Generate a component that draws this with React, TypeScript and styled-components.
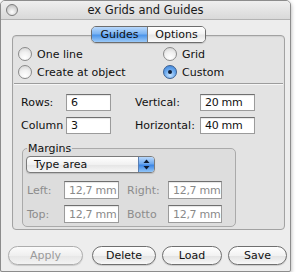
import styled, { createGlobalStyle } from "styled-components";

const GlobalStyle = createGlobalStyle`
  * { box-sizing: border-box; }
  body {
    margin: 0;
    background: #ffffff;
    font-family: 'DejaVu Sans', 'Liberation Sans', sans-serif;
    font-size: 11px;
    color: #111;
  }
`;

const Window = styled.div`
  width: 291px;
  height: 272px;
  border: 1px solid #8c8c8c;
  border-radius: 5px 5px 2px 2px;
  background: #ededed;
  box-shadow: 0 2px 4px rgba(0, 0, 0, 0.35);
  display: flex;
  flex-direction: column;
  overflow: hidden;
`;

const TitleBar = styled.div`
  height: 19px;
  display: grid;
  grid-template-columns: 24px 1fr 24px;
  align-items: center;
  background: linear-gradient(#efefef, #d9d9d9);
  border-bottom: 1px solid #b3b3b3;
`;

const CloseButton = styled.div`
  width: 12px;
  height: 12px;
  margin-left: 5px;
  border-radius: 50%;
  border: 1px solid #7d7d7d;
  background: radial-gradient(circle at 50% 70%, #ffffff, #d6d6d6 55%, #b4b4b4);
`;

const Title = styled.div`
  text-align: center;
  font-size: 11.5px;
  color: #1a1a1a;
`;

const Content = styled.div`
  padding: 6px 5px 0 11px;
  display: flex;
  flex-direction: column;
`;

const TabBar = styled.div`
  width: 273px;
  display: flex;
  justify-content: center;
  position: relative;
  z-index: 1;
  margin-bottom: -8px;
`;

const Segments = styled.div`
  display: flex;
  height: 17px;
  border: 1px solid #6d6d6d;
  border-radius: 5px;
  overflow: hidden;
  box-shadow: 0 1px 1px rgba(0, 0, 0, 0.15);
`;

const Segment = styled.div<{ $active?: boolean; $w: number }>`
  width: ${(p) => p.$w}px;
  display: flex;
  align-items: center;
  justify-content: center;
  font-size: 11px;
  color: #111;
  background: ${(p) =>
    p.$active
      ? "linear-gradient(#b9d8fb 0%, #7cb4f2 45%, #4c95ea 55%, #9ccaf8 100%)"
      : "linear-gradient(#ffffff 0%, #f4f4f4 45%, #e6e6e6 55%, #fafafa 100%)"};
  & + & {
    border-left: 1px solid #7a7a7a;
  }
`;

const TabBox = styled.div`
  width: 273px;
  border: 1px solid #a2a2a2;
  border-radius: 4px;
  background: #e3e3e3;
  padding: 9px 5px 2px 5px;
  box-shadow: inset 0 1px 1px rgba(0, 0, 0, 0.08);
`;

const RadioGrid = styled.div`
  display: grid;
  grid-template-columns: 145px 1fr;
  grid-auto-rows: 18px;
`;

const RadioItem = styled.label`
  display: flex;
  align-items: center;
  gap: 5px;
  font-size: 11px;
`;

const RadioDot = styled.span<{ $on?: boolean }>`
  width: 14px;
  height: 14px;
  border-radius: 50%;
  border: 1px solid ${(p) => (p.$on ? "#3a5f91" : "#8a8a8a")};
  background: ${(p) =>
    p.$on
      ? "radial-gradient(circle at 50% 75%, #c8e4ff, #6aa9ee 50%, #3a7fd6)"
      : "radial-gradient(circle at 50% 80%, #ffffff, #f0f0f0 50%, #cfcfcf)"};
  display: flex;
  align-items: center;
  justify-content: center;
  &::after {
    content: "";
    width: 4px;
    height: 4px;
    border-radius: 50%;
    background: #10203a;
    display: ${(p) => (p.$on ? "block" : "none")};
  }
`;

const Separator = styled.div`
  height: 2px;
  margin: 2px -4px 0 -4px;
  border-top: 1px solid #9c9c9c;
  border-bottom: 1px solid #f6f6f6;
`;

const FieldGrid = styled.div`
  display: grid;
  grid-template-columns: 45px 45px 89px 55px;
  row-gap: 6px;
  margin: 9px 0 0 3px;
  align-items: center;
`;

const FieldLabel = styled.span<{ $indent?: number; $disabled?: boolean }>`
  padding-left: ${(p) => p.$indent ?? 0}px;
  font-size: 11px;
  white-space: nowrap;
  overflow: hidden;
  color: ${(p) => (p.$disabled ? "#8c8c8c" : "#111")};
`;

const TextBox = styled.div<{ $disabled?: boolean; $h?: number }>`
  height: ${(p) => p.$h ?? 17}px;
  border: 1px solid #9b9b9b;
  border-top-color: #6f6f6f;
  background: #fff;
  padding-left: 4px;
  display: flex;
  align-items: center;
  font-size: 11px;
  letter-spacing: -0.3px;
  white-space: nowrap;
  overflow: hidden;
  color: ${(p) => (p.$disabled ? "#8a8a8a" : "#111")};
  box-shadow: inset 0 1px 1px rgba(0, 0, 0, 0.1);
`;

const Group = styled.fieldset`
  width: 214px;
  margin: 8px 0 0 4px;
  padding: 0 3px 3px 3px;
  border: 1px solid #aaaaaa;
  border-radius: 5px;
  background: rgba(0, 0, 0, 0.025);
  min-width: 0;
`;

const Legend = styled.legend`
  padding: 0 1px;
  margin-left: 1px;
  font-size: 11px;
  line-height: 13px;
  color: #111;
`;

const Select = styled.div`
  width: 129px;
  height: 17px;
  margin-top: 1px;
  border: 1px solid #7b7b7b;
  border-radius: 4px;
  display: flex;
  overflow: hidden;
  background: linear-gradient(#ffffff, #f1f1f1 50%, #e4e4e4 51%, #f7f7f7);
  box-shadow: 0 1px 1px rgba(0, 0, 0, 0.15);
`;

const SelectText = styled.div`
  flex: 1;
  padding-left: 7px;
  display: flex;
  align-items: center;
  font-size: 11px;
`;

const SelectArrows = styled.div`
  width: 16px;
  display: flex;
  align-items: center;
  justify-content: center;
  border-left: 1px solid #5a7fb3;
  background: linear-gradient(#b9d8fb 0%, #6ea9ef 45%, #3d86e4 55%, #92c6f8 100%);
`;

const MarginGrid = styled.div`
  display: grid;
  grid-template-columns: 38px 55px 49px 54px;
  row-gap: 6px;
  margin-top: 8px;
  align-items: center;
`;

const Footer = styled.div`
  display: flex;
  align-items: center;
  gap: 6px;
  padding: 16px 0 0 7px;
`;

const PushButton = styled.div<{ $w: number; $disabled?: boolean; $extra?: number }>`
  width: ${(p) => p.$w}px;
  height: 19px;
  margin-right: ${(p) => p.$extra ?? 0}px;
  border: 1px solid ${(p) => (p.$disabled ? "#adadad" : "#6f6f6f")};
  border-radius: 10px;
  display: flex;
  align-items: center;
  justify-content: center;
  font-size: 11px;
  color: ${(p) => (p.$disabled ? "#9a9a9a" : "#111")};
  background: ${(p) =>
    p.$disabled
      ? "linear-gradient(#fbfbfb, #efefef 50%, #e6e6e6 51%, #f3f3f3)"
      : "linear-gradient(#ffffff, #f2f2f2 50%, #e2e2e2 51%, #f8f8f8)"};
  box-shadow: 0 1px 1px rgba(0, 0, 0, 0.15);
`;

function Arrows() {
  return (
    <svg width="7" height="11" viewBox="0 0 7 11">
      <path d="M3.5 0.5 L6.5 4 L0.5 4 Z" fill="#0d1a2e" />
      <path d="M3.5 10.5 L6.5 7 L0.5 7 Z" fill="#0d1a2e" />
    </svg>
  );
}

export default function App() {
  return (
    <>
      <GlobalStyle />
      <Window>
        <TitleBar>
          <CloseButton />
          <Title>ex Grids and Guides</Title>
          <span />
        </TitleBar>
        <Content>
          <TabBar>
            <Segments>
              <Segment $active $w={55}>Guides</Segment>
              <Segment $w={58}>Options</Segment>
            </Segments>
          </TabBar>
          <TabBox>
            <RadioGrid>
              <RadioItem><RadioDot />One line</RadioItem>
              <RadioItem><RadioDot />Grid</RadioItem>
              <RadioItem><RadioDot />Create at object</RadioItem>
              <RadioItem><RadioDot $on />Custom</RadioItem>
            </RadioGrid>
            <Separator />
            <FieldGrid>
              <FieldLabel>Rows:</FieldLabel>
              <TextBox>6</TextBox>
              <FieldLabel $indent={24}>Vertical:</FieldLabel>
              <TextBox>20 mm</TextBox>
              <FieldLabel>Column</FieldLabel>
              <TextBox>3</TextBox>
              <FieldLabel $indent={24}>Horizontal:</FieldLabel>
              <TextBox>40 mm</TextBox>
            </FieldGrid>
            <Group>
              <Legend>Margins</Legend>
              <Select>
                <SelectText>Type area</SelectText>
                <SelectArrows><Arrows /></SelectArrows>
              </Select>
              <MarginGrid>
                <FieldLabel $indent={1} $disabled>Left:</FieldLabel>
                <TextBox $disabled $h={18}>12,7 mm</TextBox>
                <FieldLabel $indent={8} $disabled>Right:</FieldLabel>
                <TextBox $disabled $h={18}>12,7 mm</TextBox>
                <FieldLabel $indent={1} $disabled>Top:</FieldLabel>
                <TextBox $disabled $h={18}>12,7 mm</TextBox>
                <FieldLabel $indent={8} $disabled>Botto</FieldLabel>
                <TextBox $disabled $h={18}>12,7 mm</TextBox>
              </MarginGrid>
            </Group>
          </TabBox>
        </Content>
        <Footer>
          <PushButton $w={75} $disabled $extra={3}>Apply</PushButton>
          <PushButton $w={64}>Delete</PushButton>
          <PushButton $w={60}>Load</PushButton>
          <PushButton $w={59}>Save</PushButton>
        </Footer>
      </Window>
    </>
  );
}
